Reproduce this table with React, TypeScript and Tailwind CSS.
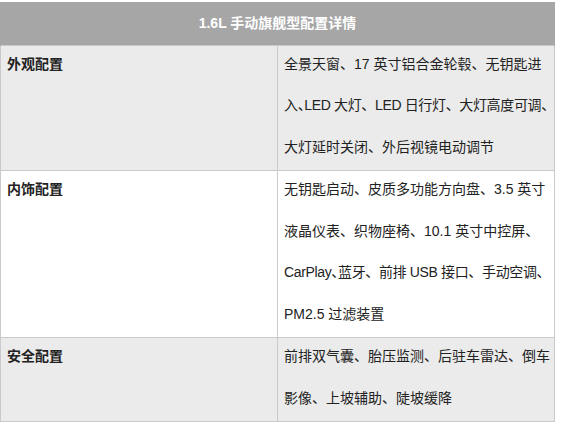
// "^" marks a half-width 、 (as the reference sets it next to Latin text)
const ROWS = [
  {
    label: '外观配置',
    bg: 'bg-[#ebebeb]',
    lines: ['全景天窗、17 英寸铝合金轮毂、无钥匙进', '入^LED 大灯、LED 日行灯、大灯高度可调、', '大灯延时关闭、外后视镜电动调节'],
  },
  {
    label: '内饰配置',
    bg: 'bg-white',
    lines: ['无钥匙启动、皮质多功能方向盘、3.5 英寸', '液晶仪表、织物座椅、10.1 英寸中控屏、', 'CarPlay^蓝牙、前排 USB 接口、手动空调、', 'PM2.5 过滤装置'],
  },
  {
    label: '安全配置',
    bg: 'bg-[#ebebeb]',
    lines: ['前排双气囊、胎压监测、后驻车雷达、倒车', '影像、上坡辅助、陡坡缓降'],
  },
]

function Line({ text }: { text: string }) {
  const parts = text.split('^')
  const tight = parts.length > 1
  return (
    <div className={`whitespace-nowrap ${tight ? 'tracking-[-0.35px]' : ''}`}>
      {parts.map((p, i) => (
        <span key={i}>
          {i > 0 && <span className="[font-feature-settings:'halt']">、</span>}
          {p}
        </span>
      ))}
    </div>
  )
}

export default function App() {
  return (
    <div className="w-[562px] h-[426px] bg-white pt-[2px] font-['Liberation_Sans','Noto_Sans_CJK_SC',sans-serif] text-[14px] text-[#222]">
      <table className="w-[554px] border-collapse table-fixed">
        <colgroup>
          <col className="w-[277px]" />
          <col className="w-[277px]" />
        </colgroup>
        <thead>
          <tr>
            <th colSpan={2} className="h-[43px] bg-[#a6a6a6] text-white font-bold text-center border-x border-[#a6a6a6]">
              1.6L 手动旗舰型配置详情
            </th>
          </tr>
        </thead>
        <tbody>
          {ROWS.map((row) => (
            <tr key={row.label} className={row.bg}>
              <td className="align-top border border-[#cacaca] pl-[6px] font-bold leading-[41.5px]">
                <div className="-mt-[2px] mb-[2px]">{row.label}</div>
              </td>
              <td className="align-top border border-[#cacaca] pl-[6px] leading-[41.5px]">
                <div className="-mt-[2px] mb-[2px]">
                  {row.lines.map((l) => (
                    <Line key={l} text={l} />
                  ))}
                </div>
              </td>
            </tr>
          ))}
        </tbody>
      </table>
    </div>
  )
}
